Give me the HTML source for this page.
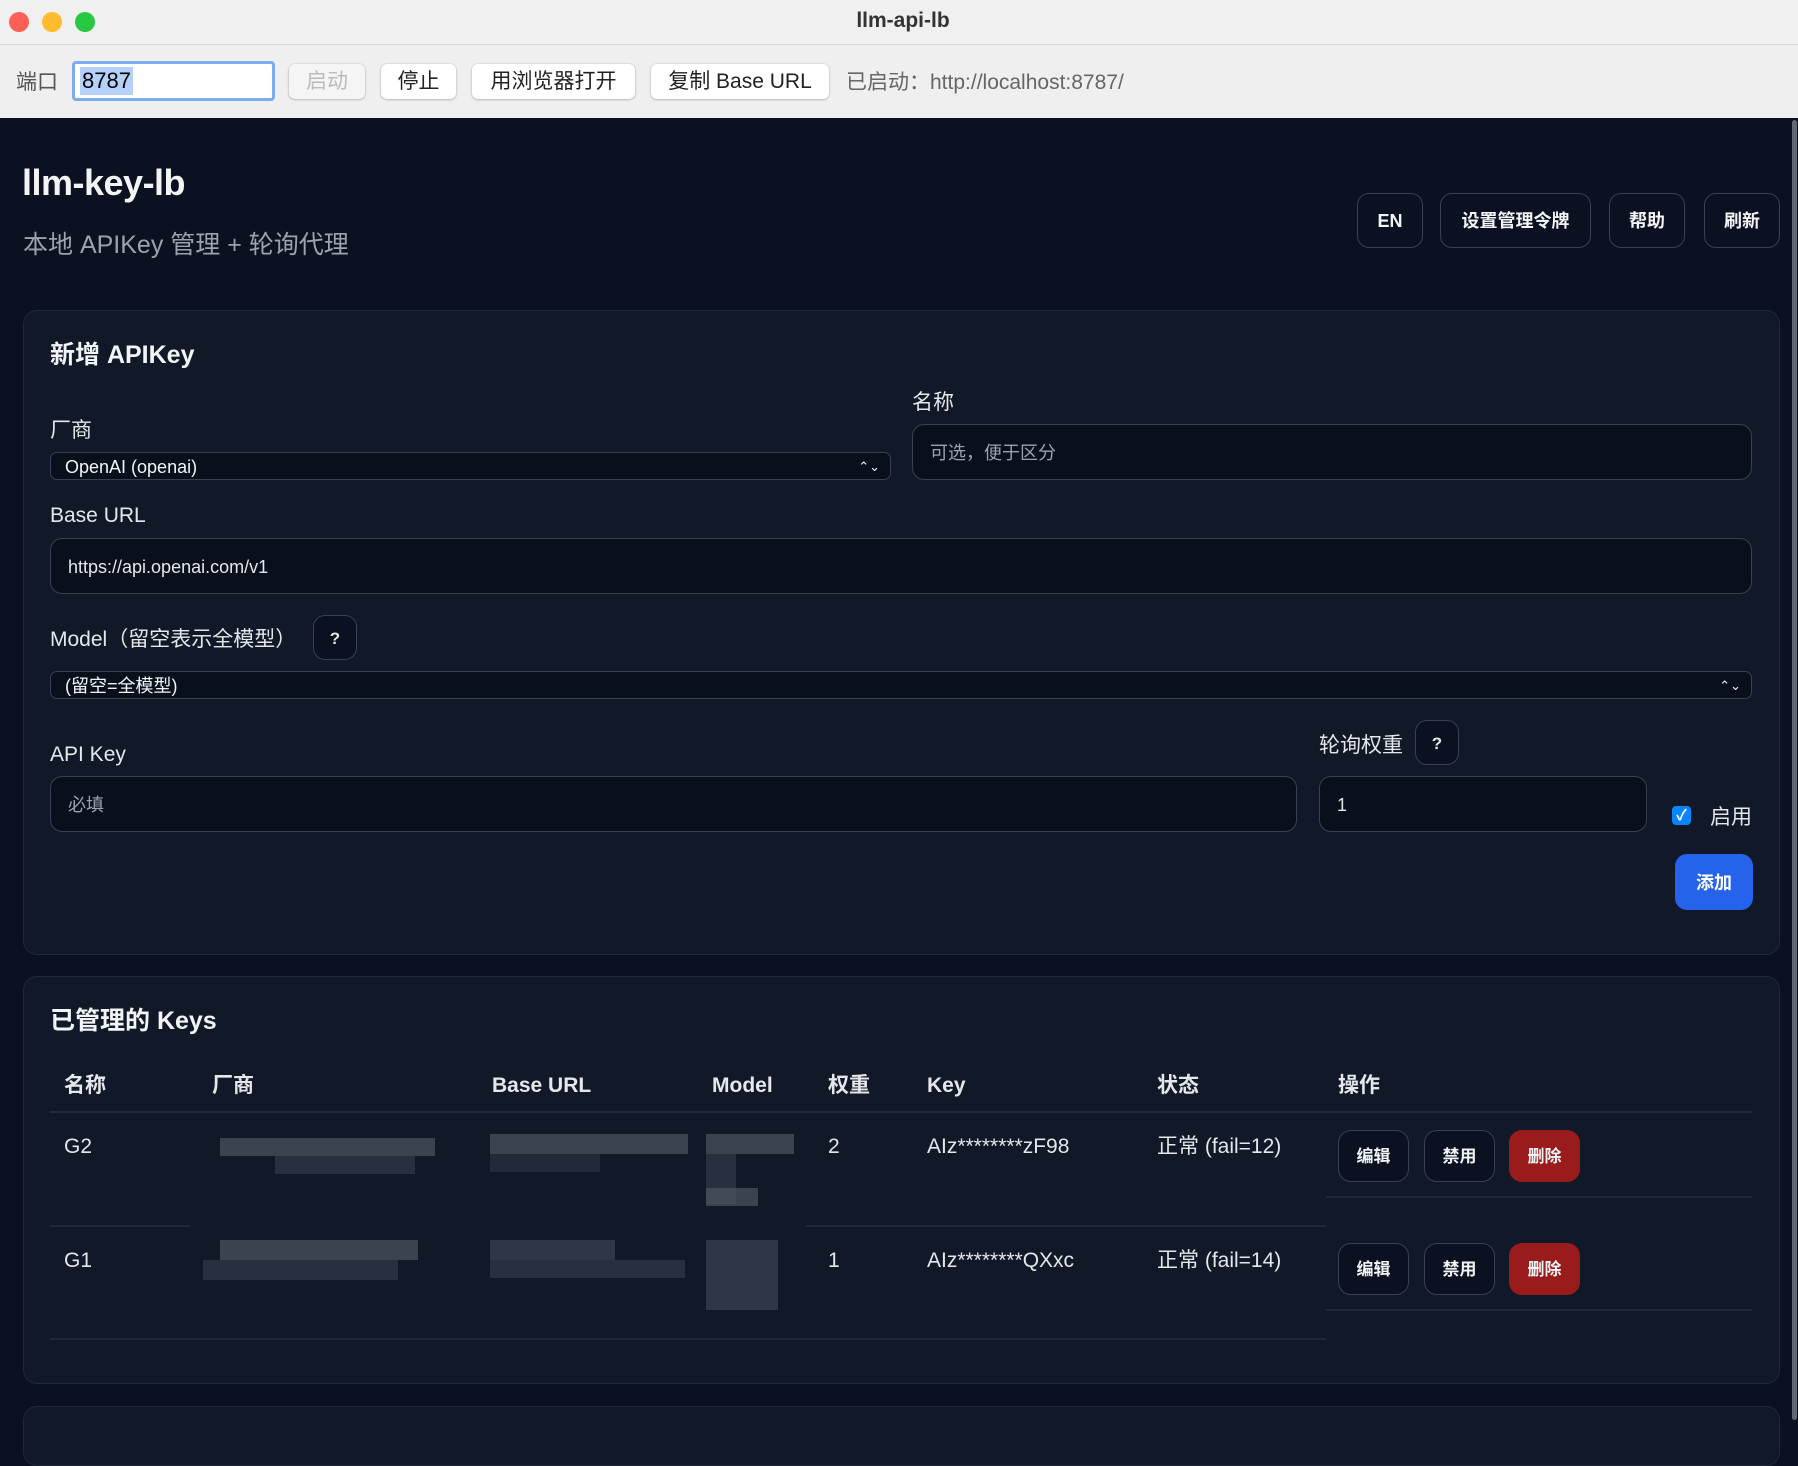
<!DOCTYPE html>
<html><head><meta charset="utf-8"><style>
*{box-sizing:border-box;margin:0;padding:0}
body{width:1798px;height:1418px;overflow:hidden;background:#0b1120;font-family:"Liberation Sans","Noto Sans CJK SC",sans-serif;color:#e5e7eb;position:relative;line-height:1.15}
.a{position:absolute}
.tb{left:0;top:0;width:1798px;height:45px;background:#f0f0f0;border-bottom:1px solid #d4d4d4}
.tl{top:12px;width:20px;height:20px;border-radius:50%}
.bar{left:0;top:45px;width:1798px;height:73px;background:#efefef}
.mb{height:35px;top:64px;background:#fff;border-radius:6px;box-shadow:0 0.5px 2px rgba(0,0,0,.35);color:#222;font-size:21px;text-align:center;line-height:35px}
.hb{top:193px;height:55px;border:1.5px solid #374151;border-radius:12px;background:#0b1120;color:#f3f4f6;font-size:18px;font-weight:bold;text-align:center;line-height:54px}
.card{background:#111827;border:1.5px solid #1f2937;border-radius:14px}
.lbl{font-size:21px;color:#e5e7eb}
.inp{background:#0a0f1c;border:1.5px solid #374151;border-radius:12px;font-size:18px;color:#e5e7eb;padding-left:17px;padding-top:2px;display:flex;align-items:center}
.sel{background:#0a0f1c;border:1.5px solid #374151;border-radius:7px;font-size:18px;color:#f3f4f6;padding-left:14px;padding-top:2px;display:flex;align-items:center}
.q{width:44px;height:45px;border:1.5px solid #374151;border-radius:12px;background:#0b1120;font-size:17px;font-weight:bold;text-align:center;line-height:45px}
.th{top:1074px;font-size:21px;font-weight:bold;color:#e5e7eb}
.td{font-size:21px;color:#e5e7eb}
.ob{width:71px;height:52px;border:1.5px solid #374151;border-radius:13px;background:#0b1120;font-size:17px;font-weight:bold;text-align:center;line-height:51px;color:#f3f4f6}
.del{background:#991b1b;border-color:#991b1b}
.ln{height:2px;background:#1f2937}
.px{background:#4b5563}
</style></head><body>
<div class="a tb"></div>
<div class="a tl" style="left:9px;background:#fe5f57"></div>
<div class="a tl" style="left:42px;background:#febc2e"></div>
<div class="a tl" style="left:75px;background:#28c840"></div>
<div class="a" style="left:0;width:1798px;top:9px;text-align:center;font-size:21px;font-weight:bold;color:#333;padding-left:8px">llm-api-lb</div>
<div class="a bar"></div>
<div class="a" style="left:16px;top:71px;font-size:21px;color:#555">端口</div>
<div class="a" style="left:72px;top:61px;width:203px;height:40px;border:3px solid #7eaaf0;border-radius:4px;background:#fff"></div>
<div class="a" style="left:80px;top:67px;height:28px;background:#b3d1fb;font-size:22px;color:#000;line-height:28px;padding:0 2px">8787</div>
<div class="a mb" style="left:289px;width:76px;color:#bbb;background:#f5f5f5">启动</div>
<div class="a mb" style="left:381px;width:75px">停止</div>
<div class="a mb" style="left:472px;width:163px">用浏览器打开</div>
<div class="a mb" style="left:651px;width:178px">复制 Base URL</div>
<div class="a" style="left:846px;top:71px;font-size:21px;color:#666">已启动：http://localhost:8787/</div>
<div class="a" style="left:1792px;top:120px;width:5px;height:1300px;background:#9ca3af;border-radius:3px;opacity:.6"></div>

<div class="a" style="left:22px;top:162px;font-size:36px;font-weight:bold;color:#f3f4f6;letter-spacing:-0.5px">llm-key-lb</div>
<div class="a" style="left:23px;top:231px;font-size:25px;color:#9ca3af">本地 APIKey 管理 + 轮询代理</div>
<div class="a hb" style="left:1357px;width:66px">EN</div>
<div class="a hb" style="left:1440px;width:151px">设置管理令牌</div>
<div class="a hb" style="left:1609px;width:76px">帮助</div>
<div class="a hb" style="left:1704px;width:76px">刷新</div>

<div class="a card" style="left:23px;top:310px;width:1757px;height:645px"></div>
<div class="a" style="left:50px;top:341px;font-size:25px;font-weight:bold;color:#f3f4f6">新增 APIKey</div>
<div class="a lbl" style="left:50px;top:419px">厂商</div>
<div class="a sel" style="left:50px;top:452px;width:841px;height:28px">OpenAI (openai)<span style="position:absolute;right:10px;font-size:13px">⌃⌄</span></div>
<div class="a lbl" style="left:912px;top:391px">名称</div>
<div class="a inp" style="left:912px;top:424px;width:840px;height:56px;color:#9ca3af">可选，便于区分</div>
<div class="a lbl" style="left:50px;top:504px">Base URL</div>
<div class="a inp" style="left:50px;top:538px;width:1702px;height:56px">https://api.openai.com/v1</div>
<div class="a lbl" style="left:50px;top:628px">Model（留空表示全模型）</div>
<div class="a q" style="left:313px;top:615px">?</div>
<div class="a sel" style="left:50px;top:671px;width:1702px;height:28px">(留空=全模型)<span style="position:absolute;right:10px;font-size:13px">⌃⌄</span></div>
<div class="a lbl" style="left:50px;top:743px">API Key</div>
<div class="a inp" style="left:50px;top:776px;width:1247px;height:56px;color:#9ca3af">必填</div>
<div class="a lbl" style="left:1319px;top:734px">轮询权重</div>
<div class="a q" style="left:1415px;top:720px">?</div>
<div class="a inp" style="left:1319px;top:776px;width:328px;height:56px">1</div>
<div class="a" style="left:1672px;top:806px;width:19px;height:19px;border-radius:4px;background:#0a84ff;color:#fff;font-size:15px;text-align:center;line-height:19px;font-weight:bold">✓</div>
<div class="a lbl" style="left:1710px;top:806px">启用</div>
<div class="a" style="left:1675px;top:854px;width:78px;height:56px;background:#2563eb;border-radius:12px;font-size:18px;font-weight:bold;color:#fff;text-align:center;line-height:58px">添加</div>

<div class="a card" style="left:23px;top:976px;width:1757px;height:408px"></div>
<div class="a" style="left:50px;top:1007px;font-size:25px;font-weight:bold;color:#f3f4f6">已管理的 Keys</div>
<div class="a th" style="left:64px">名称</div>
<div class="a th" style="left:212px">厂商</div>
<div class="a th" style="left:492px">Base URL</div>
<div class="a th" style="left:712px">Model</div>
<div class="a th" style="left:828px">权重</div>
<div class="a th" style="left:927px">Key</div>
<div class="a th" style="left:1157px">状态</div>
<div class="a th" style="left:1338px">操作</div>
<div class="a ln" style="left:50px;top:1111px;width:1702px"></div>

<div class="a td" style="left:64px;top:1135px">G2</div>
<div class="a px" style="left:220px;top:1138px;width:215px;height:18px;opacity:.7"></div>
<div class="a px" style="left:275px;top:1156px;width:140px;height:18px;opacity:.4"></div>
<div class="a px" style="left:490px;top:1134px;width:198px;height:20px;opacity:.7"></div>
<div class="a px" style="left:490px;top:1154px;width:110px;height:18px;opacity:.3"></div>
<div class="a px" style="left:706px;top:1134px;width:88px;height:20px;opacity:.7"></div>
<div class="a px" style="left:706px;top:1154px;width:30px;height:50px;opacity:.4"></div>
<div class="a px" style="left:706px;top:1188px;width:52px;height:18px;opacity:.7"></div>
<div class="a td" style="left:828px;top:1135px">2</div>
<div class="a td" style="left:927px;top:1135px">AIz********zF98</div>
<div class="a td" style="left:1157px;top:1135px">正常 (fail=12)</div>
<div class="a ob" style="left:1338px;top:1130px">编辑</div>
<div class="a ob" style="left:1424px;top:1130px">禁用</div>
<div class="a ob del" style="left:1509px;top:1130px">删除</div>
<div class="a ln" style="left:1326px;top:1196px;width:426px"></div>
<div class="a ln" style="left:50px;top:1225px;width:140px"></div>
<div class="a ln" style="left:806px;top:1225px;width:520px"></div>

<div class="a td" style="left:64px;top:1249px">G1</div>
<div class="a px" style="left:220px;top:1240px;width:198px;height:20px;opacity:.7"></div>
<div class="a px" style="left:203px;top:1260px;width:195px;height:20px;opacity:.4"></div>
<div class="a px" style="left:490px;top:1240px;width:125px;height:20px;opacity:.5"></div>
<div class="a px" style="left:490px;top:1260px;width:195px;height:18px;opacity:.4"></div>
<div class="a px" style="left:706px;top:1240px;width:72px;height:70px;opacity:.5"></div>
<div class="a td" style="left:828px;top:1249px">1</div>
<div class="a td" style="left:927px;top:1249px">AIz********QXxc</div>
<div class="a td" style="left:1157px;top:1249px">正常 (fail=14)</div>
<div class="a ob" style="left:1338px;top:1243px">编辑</div>
<div class="a ob" style="left:1424px;top:1243px">禁用</div>
<div class="a ob del" style="left:1509px;top:1243px">删除</div>
<div class="a ln" style="left:1326px;top:1309px;width:426px"></div>
<div class="a ln" style="left:50px;top:1338px;width:1276px"></div>

<div class="a card" style="left:23px;top:1406px;width:1757px;height:60px"></div>
</body></html>
